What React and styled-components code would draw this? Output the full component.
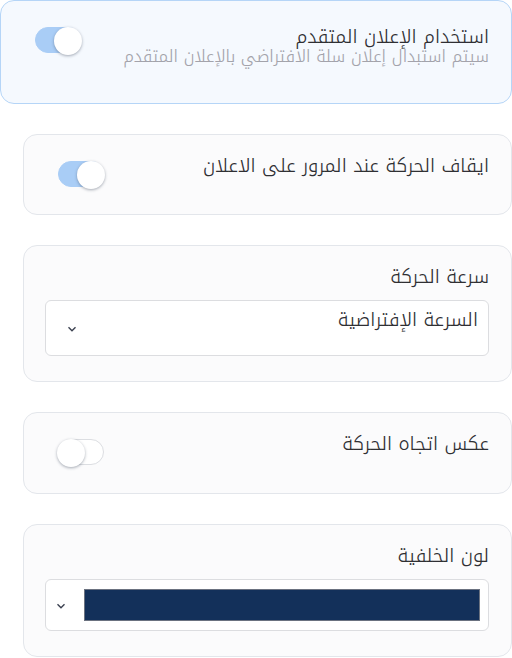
import React, { useState } from "react";
import styled, { createGlobalStyle } from "styled-components";

const GlobalStyle = createGlobalStyle`
  html, body {
    margin: 0;
    padding: 0;
    background: #ffffff;
    overflow: hidden;
  }
  body {
    font-family: "Noto Kufi Arabic", "Noto Sans Arabic", "DejaVu Sans", sans-serif;
    font-weight: 300;
  }
`;

const Page = styled.div`
  direction: rtl;
  width: 512px;
  display: flex;
  flex-direction: column;
  gap: 30px;
`;

const Card = styled.div`
  box-sizing: border-box;
  width: ${(p) => (p.$highlight ? "512px" : "489px")};
  min-height: ${(p) => p.$minHeight || 0}px;
  padding: ${(p) => p.$pad || "20px 22px 25px 34px"};
  border: 1px solid ${(p) => (p.$highlight ? "#b5d5f7" : "#e3e6eb")};
  border-radius: 14px;
  background: ${(p) => (p.$highlight ? "#f5f9fe" : "#fbfbfc")};
`;

const Row = styled.div`
  display: flex;
  justify-content: space-between;
  align-items: flex-start;
`;

const TextBlock = styled.div`
  display: flex;
  flex-direction: column;
  gap: 1px;
`;

const Title = styled.div`
  font-size: 19px;
  line-height: 22px;
  color: #2f2f33;
`;

const Subtitle = styled.div`
  font-size: 16.7px;
  line-height: 16px;
  color: #a3a3ab;
`;

const Track = styled.button`
  position: relative;
  flex: none;
  width: 46px;
  height: 26px;
  margin-top: ${(p) => p.$top || 0}px;
  padding: 0;
  border-radius: 13px;
  border: 1px solid ${(p) => (p.$on ? "#a9cdf6" : "#dcdee2")};
  background: ${(p) => (p.$on ? "#a9cdf6" : "#ffffff")};
  cursor: pointer;
`;

const Knob = styled.span`
  position: absolute;
  top: -1px;
  ${(p) => (p.$on ? "right: -2px;" : "left: -2px;")}
  width: 28px;
  height: 28px;
  border-radius: 50%;
  background: #ffffff;
  box-shadow: 0 1px 3px rgba(60, 70, 90, 0.45);
`;

function Toggle({ on, top, onClick }) {
  return (
    <Track $on={on} $top={top} onClick={onClick} dir="ltr">
      <Knob $on={on} />
    </Track>
  );
}

const Label = styled.div`
  font-size: 19px;
  line-height: 22px;
  color: #2f2f33;
  margin-bottom: 12px;
`;

const Select = styled.div`
  box-sizing: border-box;
  margin-left: -13px;
  height: ${(p) => p.$h}px;
  display: flex;
  align-items: ${(p) => (p.$center ? "center" : "flex-start")};
  justify-content: space-between;
  padding: ${(p) => (p.$center ? "0 8px 0 10px" : "7px 10px 0 21px")};
  border: 1px solid #dcdde0;
  border-radius: 6px;
  background: #ffffff;
`;

const SelectText = styled.span`
  font-size: 19px;
  line-height: 24px;
  color: #2f2f33;
`;

const Chevron = styled.svg`
  flex: none;
  width: 10px;
  height: 6px;
  margin-top: ${(p) => p.$top || 0}px;
`;

const Swatch = styled.div`
  flex: 1;
  height: 32px;
  margin-left: 18px;
  box-sizing: border-box;
  border: 1px solid #6b7280;
  background: ${(p) => p.$color};
`;

function ChevronDown({ top }) {
  return (
    <Chevron $top={top} viewBox="0 0 10 6">
      <path d="M1.5 1.2l3.5 3.5 3.5-3.5" fill="none" stroke="#3b4150" strokeWidth="1.4" />
    </Chevron>
  );
}

export default function App() {
  const [adv, setAdv] = useState(true);
  const [pause, setPause] = useState(true);
  const [reverse, setReverse] = useState(false);

  return (
    <>
      <GlobalStyle />
      <Page>
        <Card $highlight $minHeight={104} $pad="25px 22px 20px 34px">
          <Row>
            <TextBlock>
              <Title>استخدام الإعلان المتقدم</Title>
              <Subtitle>سيتم استبدال إعلان سلة الافتراضي بالإعلان المتقدم</Subtitle>
            </TextBlock>
            <Toggle on={adv} top={1} onClick={() => setAdv(!adv)} />
          </Row>
        </Card>

        <Card $minHeight={81}>
          <Row>
            <Title>ايقاف الحركة عند المرور على الاعلان</Title>
            <Toggle on={pause} top={6} onClick={() => setPause(!pause)} />
          </Row>
        </Card>

        <Card>
          <Label>سرعة الحركة</Label>
          <Select $h={56}>
            <SelectText>السرعة الإفتراضية</SelectText>
            <ChevronDown top={18} />
          </Select>
        </Card>

        <Card $minHeight={82}>
          <Row>
            <Title>عكس اتجاه الحركة</Title>
            <Toggle on={reverse} top={6} onClick={() => setReverse(!reverse)} />
          </Row>
        </Card>

        <Card>
          <Label>لون الخلفية</Label>
          <Select $h={52} $center>
            <Swatch $color="#13305a" />
            <ChevronDown top={1} />
          </Select>
        </Card>
      </Page>
    </>
  );
}
